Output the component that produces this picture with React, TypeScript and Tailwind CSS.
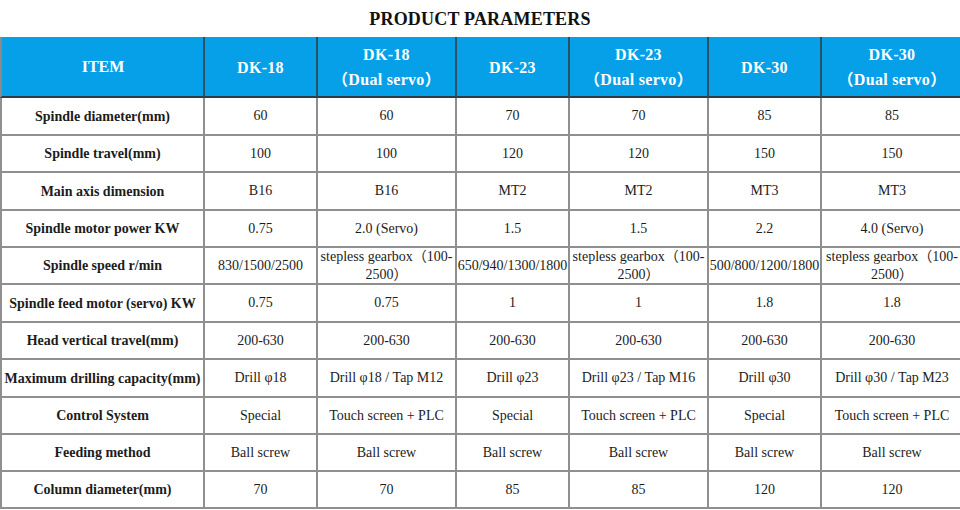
import React from 'react';

interface Row {
  item: string;
  values: string[];
}

const models = [
  { name: 'DK-18' },
  { name: 'DK-18', sub: '（Dual servo）' },
  { name: 'DK-23' },
  { name: 'DK-23', sub: '（Dual servo）' },
  { name: 'DK-30' },
  { name: 'DK-30', sub: '（Dual servo）' },
];

const gearbox = 'stepless gearbox（100-2500）';

const rows: Row[] = [
  { item: 'Spindle diameter(mm)', values: ['60', '60', '70', '70', '85', '85'] },
  { item: 'Spindle travel(mm)', values: ['100', '100', '120', '120', '150', '150'] },
  { item: 'Main axis dimension', values: ['B16', 'B16', 'MT2', 'MT2', 'MT3', 'MT3'] },
  { item: 'Spindle motor power KW', values: ['0.75', '2.0 (Servo)', '1.5', '1.5', '2.2', '4.0 (Servo)'] },
  { item: 'Spindle speed r/min', values: ['830/1500/2500', gearbox, '650/940/1300/1800', gearbox, '500/800/1200/1800', gearbox] },
  { item: 'Spindle feed motor (servo) KW', values: ['0.75', '0.75', '1', '1', '1.8', '1.8'] },
  { item: 'Head vertical travel(mm)', values: ['200-630', '200-630', '200-630', '200-630', '200-630', '200-630'] },
  {
    item: 'Maximum drilling capacity(mm)',
    values: ['Drill φ18', 'Drill φ18 / Tap M12', 'Drill φ23', 'Drill φ23 / Tap M16', 'Drill φ30', 'Drill φ30 / Tap M23'],
  },
  {
    item: 'Control System',
    values: ['Special', 'Touch screen + PLC', 'Special', 'Touch screen + PLC', 'Special', 'Touch screen + PLC'],
  },
  { item: 'Feeding method', values: ['Ball screw', 'Ball screw', 'Ball screw', 'Ball screw', 'Ball screw', 'Ball screw'] },
  { item: 'Column diameter(mm)', values: ['70', '70', '85', '85', '120', '120'] },
];

const serif = { fontFamily: '"Liberation Serif", "Noto Sans CJK SC", serif' };

const App: React.FC = () => {
  return (
    <div className="w-[960px] h-[510px] overflow-hidden bg-white text-[#1c1c1c]" style={serif}>
      <div className="h-[37px] flex items-center justify-center pt-px">
        <h1 className="text-[18px] font-bold text-[#111] tracking-[0.2px]">PRODUCT PARAMETERS</h1>
      </div>
      <div className="w-[964px] grid grid-cols-[205px_113px_139px_113px_139px_113px_142px] grid-rows-[61px_38px_37px_38px_37px_37px_38px_37px_38px_37px_37px_37px]">
        <div className="bg-[#05a0e8] border-l-2 border-r-2 border-b-2 border-l-[#8a8a8a] border-r-[#2a5068] border-b-[#2f3a44] flex items-center justify-center text-white font-bold text-[16px] pl-px">
          ITEM
        </div>
        {models.map((m, i) => (
          <div
            key={i}
            className="bg-[#05a0e8] border-r-2 border-b-2 border-r-[#2a5068] border-b-[#2f3a44] flex flex-col items-center justify-center text-white font-bold text-[16px] leading-[25px] tracking-[0.3px] pt-px"
          >
            <span>{m.name}</span>
            {m.sub && <span>{m.sub}</span>}
          </div>
        ))}
        {rows.map((row) => (
          <React.Fragment key={row.item}>
            <div className="border-l-2 border-r-2 border-b-2 border-[#8f8f8f] flex items-center justify-center font-bold text-[14px] whitespace-nowrap">
              {row.item}
            </div>
            {row.values.map((v, i) => (
              <div
                key={i}
                className="border-r-2 border-b-2 border-[#8f8f8f] flex items-center justify-center text-center text-[14px] leading-[18px] px-[1px]"
              >
                {v}
              </div>
            ))}
          </React.Fragment>
        ))}
      </div>
    </div>
  );
};

export default App;
